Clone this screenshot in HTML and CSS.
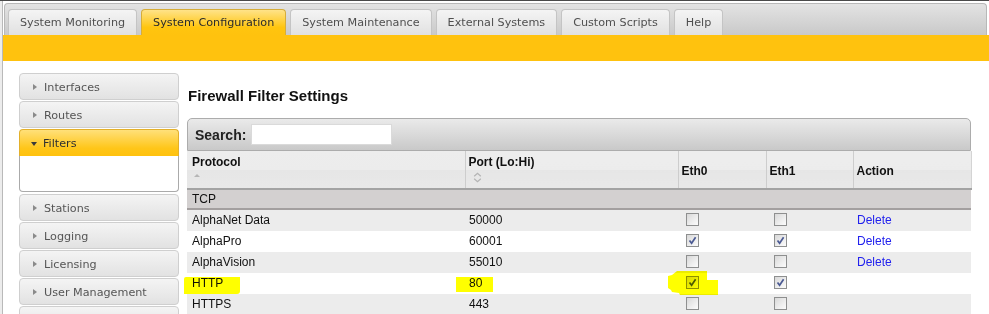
FILE: index.html
```html
<!DOCTYPE html>
<html>
<head>
<meta charset="utf-8">
<link rel="stylesheet" href="styles.css">
</head>
<body>
<div class="topline"></div>
<div class="shell">
  <div class="tabbar">
    <div class="tab">System Monitoring</div>
    <div class="tab active">System Configuration</div>
    <div class="tab">System Maintenance</div>
    <div class="tab">External Systems</div>
    <div class="tab">Custom Scripts</div>
    <div class="tab">Help</div>
  </div>
  <div class="band"></div>
  <div class="content">
    <nav class="sidebar">
      <div class="nav-item"><span class="tri-r"></span>Interfaces</div>
      <div class="nav-item"><span class="tri-r"></span>Routes</div>
      <div class="nav-group">
        <div class="nav-item open"><span class="tri-d"></span>Filters</div>
        <div class="nav-panel"></div>
      </div>
      <div class="nav-item"><span class="tri-r"></span>Stations</div>
      <div class="nav-item"><span class="tri-r"></span>Logging</div>
      <div class="nav-item"><span class="tri-r"></span>Licensing</div>
      <div class="nav-item"><span class="tri-r"></span>User Management</div>
      <div class="nav-item"></div>
    </nav>
    <main class="main">
      <h1 class="title">Firewall Filter Settings</h1>
      <div class="grid">
        <div class="searchbar"><label class="search-label">Search:</label><input class="search-input" type="text"></div>
        <table class="tbl">
          <colgroup>
            <col class="c1"><col class="c2"><col class="c3"><col class="c4"><col class="c5">
          </colgroup>
          <thead>
            <tr>
              <th class="th-sort first">Protocol<div class="sort"><span class="sort-up"></span></div></th>
              <th class="th-sort">Port (Lo:Hi)<div class="sort"><svg class="sort-both" width="9" height="11" viewBox="0 0 9 11"><path d="M1.2 4.2 L4.5 1.2 L7.8 4.2 M1.2 6.8 L4.5 9.8 L7.8 6.8" fill="none" stroke="#b4b4b4" stroke-width="1.2"/></svg></div></th>
              <th class="th-mid">Eth0</th>
              <th class="th-mid">Eth1</th>
              <th class="th-mid">Action</th>
            </tr>
          </thead>
          <tbody>
            <tr class="group"><td colspan="5">TCP</td></tr>
            <tr class="odd">
              <td class="first">AlphaNet Data</td><td>50000</td>
              <td><span class="cb"></span></td><td><span class="cb"></span></td>
              <td><a class="del">Delete</a></td>
            </tr>
            <tr>
              <td class="first">AlphaPro</td><td>60001</td>
              <td><span class="cb on"><svg width="11" height="11" viewBox="0 0 11 11"><path d="M2.5 5.5 L4.6 8.3 L8.6 2.2" fill="none" stroke="#4b5a93" stroke-width="1.7"/></svg></span></td>
              <td><span class="cb on"><svg width="11" height="11" viewBox="0 0 11 11"><path d="M2.5 5.5 L4.6 8.3 L8.6 2.2" fill="none" stroke="#4b5a93" stroke-width="1.7"/></svg></span></td>
              <td><a class="del">Delete</a></td>
            </tr>
            <tr class="odd">
              <td class="first">AlphaVision</td><td>55010</td>
              <td><span class="cb"></span></td><td><span class="cb"></span></td>
              <td><a class="del">Delete</a></td>
            </tr>
            <tr>
              <td class="first hl-cell"><span class="hl hl-http"></span>HTTP</td>
              <td class="hl-cell"><span class="hl hl-80"></span>80</td>
              <td class="hl-cell"><span class="cb on"><svg width="11" height="11" viewBox="0 0 11 11"><path d="M2.5 5.5 L4.6 8.3 L8.6 2.2" fill="none" stroke="#4b5a93" stroke-width="1.7"/></svg></span><svg class="hl-blob" width="52" height="25" viewBox="0 0 52 25"><path d="M10 0 L40 0 L40 9 L51 9 L51 24 L13 24 L12 22 L5 21 L4 19 L1 17 L1 5 L5 4 Z" fill="#ffff00"/></svg></td>
              <td><span class="cb on"><svg width="11" height="11" viewBox="0 0 11 11"><path d="M2.5 5.5 L4.6 8.3 L8.6 2.2" fill="none" stroke="#4b5a93" stroke-width="1.7"/></svg></span></td>
              <td></td>
            </tr>
            <tr class="odd">
              <td class="first">HTTPS</td><td>443</td>
              <td><span class="cb"></span></td><td><span class="cb"></span></td>
              <td></td>
            </tr>
          </tbody>
        </table>
      </div>
    </main>
  </div>
</div>
</body>
</html>
```

FILE: styles.css
```css
html, body {
  margin: 0;
  padding: 0;
}
body {
  background: #ececec;
  width: 989px;
  height: 314px;
  overflow: hidden;
  font-family: "Liberation Sans", Arial, sans-serif;
}
.topline {
  height: 1px;
  background: #4a4a4a;
}
.shell {
  margin-left: 2px;
  border-left: 1px solid #b9b9b9;
  background: #fff;
  padding-top: 2px;
  height: 313px;
  box-sizing: border-box;
  overflow: hidden;
}
.tabbar {
  margin: 0 2px 0 1px;
  height: 32px;
  box-sizing: border-box;
  border: 1px solid #b8b8b8;
  border-bottom: 0;
  border-radius: 4px 4px 0 0;
  background: linear-gradient(#e3e3e3, #c9c9c9);
  padding: 5px 0 0 3px;
  display: flex;
  align-items: flex-end;
  gap: 4px;
}
.tab {
  height: 26px;
  box-sizing: border-box;
  border: 1px solid #c4c4c4;
  border-bottom: 0;
  border-radius: 4px 4px 0 0;
  background: linear-gradient(#f4f4f4, #e1e1e1);
  padding: 1px 11px 0;
  line-height: 24px;
  font-family: "DejaVu Sans", Verdana, sans-serif;
  font-size: 11.2px;
  color: #4f4f4f;
  white-space: nowrap;
}
.tab.active {
  background: linear-gradient(#ffe389, #ffc50f 70%, #ffc20e);
  border-color: #d6ad3a;
  color: #2b2b2b;
}
.band {
  height: 26px;
  background: #ffc20e;
}
.content {
  display: flex;
  gap: 8px;
  padding: 12px 0 0 16px;
}
.sidebar {
  width: 160px;
  flex: none;
}
.nav-item {
  height: 27px;
  box-sizing: border-box;
  border: 1px solid #cfcfcf;
  border-radius: 4px;
  background: linear-gradient(#f4f4f4, #e2e2e2);
  margin-bottom: 1px;
  display: flex;
  align-items: center;
  padding: 1px 0 0 13px;
  font-family: "DejaVu Sans", Verdana, sans-serif;
  font-size: 11.2px;
  color: #555;
}
.tri-r {
  width: 0;
  height: 0;
  border-top: 3px solid transparent;
  border-bottom: 3px solid transparent;
  border-left: 4px solid #8a8a8a;
  margin-right: 7px;
}
.tri-d {
  width: 0;
  height: 0;
  border-left: 3.5px solid transparent;
  border-right: 3.5px solid transparent;
  border-top: 4px solid #3a3a3a;
  margin: 0 6px 0 -2px;
}
.nav-group {
  margin-bottom: 2px;
}
.nav-item.open {
  margin-bottom: 0;
  border-color: #e3b02a;
  border-bottom: 0;
  border-radius: 4px 4px 0 0;
  background: linear-gradient(#ffe07a, #ffc619 70%, #ffc20e);
  color: #2f2f2f;
}
.nav-panel {
  height: 36px;
  box-sizing: border-box;
  border: 1px solid #aaa;
  border-top: 0;
  border-radius: 0 0 4px 4px;
  background: #fff;
}
.main {
  width: 784px;
  flex: none;
}
.title {
  margin: 13px 0 13px 1px;
  font-size: 15px;
  line-height: 19px;
  font-weight: bold;
  color: #111;
}
.grid {
  width: 784px;
}
.searchbar {
  height: 33px;
  box-sizing: border-box;
  border: 1px solid #acacac;
  border-radius: 5px 5px 0 0;
  background: linear-gradient(#eaeaea, #c9c9c9);
  display: flex;
  align-items: center;
  padding-left: 7px;
}
.search-label {
  font-weight: bold;
  font-size: 14px;
  color: #222;
}
.search-input {
  margin: 0 0 0 5px;
  width: 141px;
  height: 21px;
  box-sizing: border-box;
  border: 1px solid #dadada;
  background: #fff;
  padding: 0;
}
.tbl {
  width: 784px;
  border-collapse: collapse;
  table-layout: fixed;
  font-size: 12px;
  color: #111;
}
.c1 { width: 278px; }
.c2 { width: 213px; }
.c3 { width: 88px; }
.c4 { width: 87px; }
.c5 { width: 118px; }
.tbl th {
  height: 35px;
  box-sizing: border-box;
  background: linear-gradient(#ededed 0, #ececec 52%, #e6e6e6 52%, #e8e8e8 100%);
  border-left: 1px solid #cdcdcd;
  border-bottom: 2px solid #a3a3a3;
  text-align: left;
  font-weight: bold;
  font-size: 12px;
  line-height: 15px;
  padding: 0 0 0 3px;
  color: #111;
}
.tbl th.first {
  border-left: 0;
  padding-left: 5px;
}
.tbl th:last-child {
  border-right: 1px solid #d4d4d4;
}
.th-sort {
  vertical-align: top;
  padding-top: 4px !important;
}
.th-mid {
  vertical-align: middle;
  padding-top: 3px !important;
}
.sort {
  height: 14px;
  margin-top: 2px;
  position: relative;
}
.sort-up {
  display: block;
  width: 0;
  height: 0;
  margin: 4px 0 0 2px;
  border-left: 3.5px solid transparent;
  border-right: 3.5px solid transparent;
  border-bottom: 3px solid #b6b6b6;
}
.sort-both {
  display: block;
  margin: 0 0 0 4px;
}
.tbl td {
  height: 21px;
  box-sizing: border-box;
  padding: 0 0 0 4px;
  line-height: 21px;
  white-space: nowrap;
  vertical-align: middle;
}
.tbl td.first {
  padding-left: 5px;
}
.tbl tr.group td {
  height: 20px;
  line-height: 18px;
  background: #d3d0d0;
  border-bottom: 2px solid #a39f9f;
  padding-left: 5px;
  color: #111;
}
.tbl tr.odd td {
  background: #ececec;
}
.cb {
  display: inline-block;
  vertical-align: middle;
  width: 13px;
  height: 13px;
  box-sizing: border-box;
  border: 1px solid #8e8f8f;
  background: linear-gradient(135deg, #d8d8d8, #f2f2f2 70%, #fbfbfb);
  margin: -2px 0 0 4px;
  position: relative;
}
.cb svg {
  display: block;
  position: absolute;
  left: 0;
  top: 0;
}
.del {
  color: #2121ee;
  text-decoration: none;
}
.hl-cell {
  position: relative;
}
.hl {
  position: absolute;
  background: #ffff00;
  mix-blend-mode: multiply;
}
.hl-http {
  left: -3px;
  top: 4px;
  width: 56px;
  height: 17px;
  border-radius: 2px 0 3px 0;
}
.hl-80 {
  left: -9px;
  top: 4px;
  width: 37px;
  height: 15px;
}
.hl-blob {
  position: absolute;
  left: -11px;
  top: -2px;
  mix-blend-mode: multiply;
}
```
